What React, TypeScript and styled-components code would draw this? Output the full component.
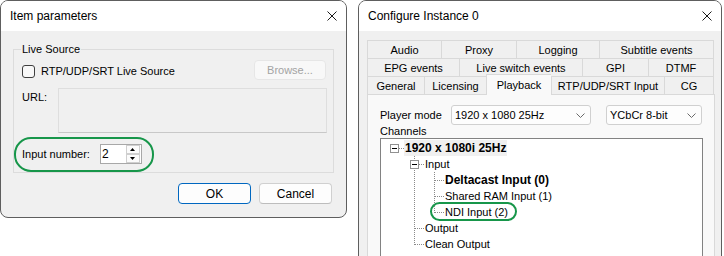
import React from "react";
import styled, { createGlobalStyle } from "styled-components";

type Conn = "none" | "pipe" | "tee" | "elbow" | "dash";

interface ITreeNode {
      label: string;
      guides: Conn[];
      bold?: boolean;
      toggle?: boolean;
      selected?: boolean;
      marked?: boolean;
}

const tabRows: [string, number][][] = [
      [
            ["Audio", 74],
            ["Proxy", 75],
            ["Logging", 83],
            ["Subtitle events", 115],
      ],
      [
            ["EPG events", 92],
            ["Live switch events", 123],
            ["GPI", 66],
            ["DTMF", 66],
      ],
      [
            ["General", 57],
            ["Licensing", 62],
            ["Playback", 65],
            ["RTP/UDP/SRT Input", 113],
            ["CG", 50],
      ],
];

const nodes: ITreeNode[] = [
      { label: "1920 x 1080i 25Hz", bold: true, selected: true, toggle: true, guides: ["dash"] },
      { label: "Input", toggle: true, guides: ["none", "tee"] },
      { label: "Deltacast Input (0)", bold: true, guides: ["none", "pipe", "tee"] },
      { label: "Shared RAM Input (1)", guides: ["none", "pipe", "tee"] },
      { label: "NDI Input (2)", marked: true, guides: ["none", "pipe", "elbow"] },
      { label: "Output", guides: ["none", "tee"] },
      { label: "Clean Output", guides: ["none", "elbow"] },
];

const GlobalStyle = createGlobalStyle`
      html, body {
            margin: 0;
            padding: 0;
            height: 256px;
            overflow: hidden;
            background: #fff;
      }
      body {
            font-family: "Liberation Sans", Arial, sans-serif;
            color: #000;
      }
`;

const Page = styled.div`
      display: flex;
      align-items: flex-start;
      gap: 11px;
`;

const Dialog = styled.div<{ $width: number; $height?: number }>`
      width: ${({ $width }) => $width}px;
      ${({ $height }) => ($height ? `height: ${$height}px;` : "")}
      flex-shrink: 0;
      box-sizing: border-box;
      border: 1px solid #5e5e5e;
      border-radius: 8px;
      background: #f0f0f0;
      overflow: hidden;
`;

const TitleBar = styled.div`
      height: 30px;
      display: flex;
      align-items: center;
      justify-content: space-between;
      padding: 0 9px;
      background: #fff;
      font-size: 12px;
`;

const LeftBody = styled.div`
      padding: 11px 12px 13px 12px;
      font-size: 11px;
`;

const GroupBox = styled.fieldset`
      margin: 0;
      padding: 4px 7px 8px 8px;
      border: 1px solid #dcdcdc;
      min-inline-size: 0;
`;

const Legend = styled.legend`
      padding: 0 1px;
      margin-left: -1px;
      line-height: 14px;
      font-size: 11px;
`;

const SourceRow = styled.div`
      display: flex;
      align-items: center;
      justify-content: space-between;
      height: 20px;
`;

const CheckLabel = styled.label`
      display: flex;
      align-items: center;
      gap: 6px;
      padding-top: 2px;
`;

const CheckBox = styled.span`
      width: 13px;
      height: 13px;
      box-sizing: border-box;
      border: 1px solid #3f3f3f;
      border-radius: 3px;
      background: #f8f8f8;
`;

const BrowseButton = styled.div`
      width: 72px;
      height: 20px;
      box-sizing: border-box;
      border: 1px solid #e6e6e6;
      border-radius: 4px;
      background: #f8f8f8;
      color: #a3a3a3;
      display: flex;
      align-items: center;
      justify-content: center;
`;

const UrlRow = styled.div`
      display: flex;
      margin-top: 8px;
`;

const UrlLabel = styled.span`
      width: 36px;
      padding-top: 2px;
      line-height: 14px;
`;

const UrlBox = styled.div`
      width: 269px;
      height: 45px;
      box-sizing: border-box;
      margin-right: -1px;
      border: 1px solid #dedede;
      border-bottom-color: #c8c8c8;
      background: #f0f0f0;
`;

const NumberRow = styled.div`
      position: relative;
      display: flex;
      align-items: center;
      gap: 10px;
      margin-top: 11px;
      height: 20px;
`;

const Marker = styled.span<{ $thick?: number; $radius: number }>`
      position: absolute;
      box-sizing: border-box;
      border: ${({ $thick }) => $thick ?? 2}px solid #17964a;
      border-radius: ${({ $radius }) => $radius}px;
      pointer-events: none;
`;

const Spin = styled.div`
      width: 42px;
      height: 20px;
      box-sizing: border-box;
      border: 1px solid #a8a8a8;
      background: #fff;
      display: flex;
`;

const SpinValue = styled.span`
      flex: 1;
      padding-left: 1px;
      line-height: 18px;
      font-size: 12px;
`;

const SpinButtons = styled.div`
      width: 15px;
      box-sizing: border-box;
      padding: 0 1px 0 0;
      display: flex;
      flex-direction: column;
`;

const SpinButton = styled.div`
      flex: 1;
      box-sizing: border-box;
      border: 1px solid #cfcfcf;
      background: #fbfbfb;
      display: flex;
      align-items: center;
      justify-content: center;
`;

const ButtonRow = styled.div`
      display: flex;
      justify-content: flex-end;
      gap: 8px;
      margin-top: 10px;
      padding-right: 2px;
`;

const Button = styled.div<{ $default?: boolean }>`
      width: 73px;
      height: 21px;
      box-sizing: border-box;
      border: 1px solid ${({ $default }) => ($default ? "#0067c0" : "#d0d0d0")};
      border-bottom-color: ${({ $default }) => ($default ? "#0067c0" : "#bdbdbd")};
      border-radius: 4px;
      background: #fdfdfd;
      display: flex;
      align-items: center;
      justify-content: center;
      font-size: 12px;
`;

const RightBody = styled.div`
      padding: 9px 6px 0 8px;
`;

const TabRow = styled.div`
      display: flex;
      height: 18px;
`;

const Tab = styled.div<{ $w: number; $active?: boolean }>`
      width: ${({ $w }) => $w}px;
      height: ${({ $active }) => ($active ? 21 : 18)}px;
      margin-top: ${({ $active }) => ($active ? -2 : 0)}px;
      box-sizing: border-box;
      border: 1px solid #d9d9d9;
      border-bottom: none;
      border-right: none;
      background: ${({ $active }) => ($active ? "#f9f9f9" : "#f0f0f0")};
      position: relative;
      z-index: ${({ $active }) => ($active ? 1 : 0)};
      display: flex;
      align-items: center;
      justify-content: center;
      font-size: 11px;
      white-space: nowrap;

      &:last-child {
            border-right: 1px solid #d9d9d9;
      }
`;

const Panel = styled.div`
      width: 348px;
      height: 200px;
      box-sizing: border-box;
      border: 1px solid #d9d9d9;
      background: #f9f9f9;
      padding: 10px 11px 0 12px;
      font-size: 11px;
`;

const ModeRow = styled.div`
      display: flex;
      align-items: center;
      height: 20px;
`;

const ModeLabel = styled.span`
      width: 71px;
`;

const Combo = styled.div<{ $w: number; $gap?: number }>`
      width: ${({ $w }) => $w}px;
      margin-left: ${({ $gap }) => $gap ?? 0}px;
      height: 20px;
      box-sizing: border-box;
      border: 1px solid #d0d0d0;
      border-radius: 3px;
      background: #fdfdfd;
      display: flex;
      align-items: center;
      justify-content: space-between;
      padding: 0 5px 0 3px;
`;

const ChannelsLabel = styled.div`
      line-height: 13px;
`;

const Tree = styled.div`
      width: 323px;
      height: 130px;
      box-sizing: border-box;
      border: 1px solid #828282;
      background: #fff;
      padding: 1px 0 0 3px;
`;

const TreeRow = styled.div`
      display: flex;
      height: 16px;
`;

const TreeLabel = styled.span<{ $bold?: boolean; $selected?: boolean }>`
      position: relative;
      padding: 0 1px;
      line-height: 16px;
      font-size: ${({ $bold }) => ($bold ? 12 : 11)}px;
      font-weight: ${({ $bold }) => ($bold ? 700 : 400)};
      background: ${({ $selected }) => ($selected ? "#f0f0f0" : "transparent")};
      white-space: nowrap;
`;

const CloseIcon = () => (
      <svg width="10" height="10" viewBox="0 0 10 10">
            <path d="M0.5 0.5L9.5 9.5M9.5 0.5L0.5 9.5" stroke="#1a1a1a" strokeWidth="1" />
      </svg>
);

const Chevron = () => (
      <svg width="9" height="5" viewBox="0 0 9 5">
            <path d="M0.5 0.5L4.5 4.5L8.5 0.5" fill="none" stroke="#6a6a6a" strokeWidth="1" />
      </svg>
);

const Arrow = ({ down }: { down?: boolean }) => (
      <svg width="5" height="3" viewBox="0 0 5 3">
            <path d={down ? "M0 0H5L2.5 3Z" : "M0 3H5L2.5 0Z"} fill="#000" />
      </svg>
);

const Guide = ({ kind, toggle }: { kind: Conn; toggle?: boolean }) => {
      const dash = { stroke: "#8a8a8a", strokeWidth: 1, strokeDasharray: "1 1" };
      return (
            <svg width="20" height="16" viewBox="0 0 20 16">
                  {(kind === "pipe" || kind === "tee") && <line x1="10.5" y1="0" x2="10.5" y2="16" {...dash} />}
                  {kind === "elbow" && <line x1="10.5" y1="0" x2="10.5" y2="9" {...dash} />}
                  {(kind === "tee" || kind === "elbow" || kind === "dash") && (
                        <line x1="11" y1="8.5" x2="20" y2="8.5" {...dash} />
                  )}
                  {toggle && (
                        <>
                              <rect x="6.5" y="4.5" width="8" height="8" fill="#fff" stroke="#919191" />
                              <line x1="8" y1="8.5" x2="13" y2="8.5" stroke="#000" strokeWidth="1" />
                        </>
                  )}
            </svg>
      );
};

const ItemParameters = () => (
      <Dialog $width={347}>
            <TitleBar>
                  <span>Item parameters</span>
                  <CloseIcon />
            </TitleBar>
            <LeftBody>
                  <GroupBox>
                        <Legend>Live Source</Legend>
                        <SourceRow>
                              <CheckLabel>
                                    <CheckBox />
                                    RTP/UDP/SRT Live Source
                              </CheckLabel>
                              <BrowseButton>Browse...</BrowseButton>
                        </SourceRow>
                        <UrlRow>
                              <UrlLabel>URL:</UrlLabel>
                              <UrlBox />
                        </UrlRow>
                        <NumberRow>
                              <span>Input number:</span>
                              <Spin>
                                    <SpinValue>2</SpinValue>
                                    <SpinButtons>
                                          <SpinButton>
                                                <Arrow />
                                          </SpinButton>
                                          <SpinButton>
                                                <Arrow down />
                                          </SpinButton>
                                    </SpinButtons>
                              </Spin>
                              <Marker
                                    $thick={2.5}
                                    $radius={17}
                                    style={{ left: -8, top: -7, width: 140, height: 35 }}
                              />
                        </NumberRow>
                  </GroupBox>
                  <ButtonRow>
                        <Button $default>OK</Button>
                        <Button>Cancel</Button>
                  </ButtonRow>
            </LeftBody>
      </Dialog>
);

const ConfigureInstance = () => (
      <Dialog $width={364} $height={300}>
            <TitleBar>
                  <span>Configure Instance 0</span>
                  <CloseIcon />
            </TitleBar>
            <RightBody>
                  {tabRows.map((row, i) => (
                        <TabRow key={i}>
                              {row.map(([label, w]) => (
                                    <Tab key={label} $w={w} $active={label === "Playback"}>
                                          {label}
                                    </Tab>
                              ))}
                        </TabRow>
                  ))}
                  <Panel>
                        <ModeRow>
                              <ModeLabel>Player mode</ModeLabel>
                              <Combo $w={140}>
                                    1920 x 1080 25Hz
                                    <Chevron />
                              </Combo>
                              <Combo $w={96} $gap={15}>
                                    YCbCr 8-bit
                                    <Chevron />
                              </Combo>
                        </ModeRow>
                        <ChannelsLabel>Channels</ChannelsLabel>
                        <Tree>
                              {nodes.map((node) => (
                                    <TreeRow key={node.label}>
                                          {node.guides.map((g, i) => (
                                                <Guide
                                                      key={i}
                                                      kind={g}
                                                      toggle={node.toggle && i === node.guides.length - 1}
                                                />
                                          ))}
                                          <TreeLabel $bold={node.bold} $selected={node.selected}>
                                                {node.label}
                                                {node.marked && (
                                                      <Marker
                                                            $radius={10}
                                                            style={{ left: -14, top: -2, width: 87, height: 19 }}
                                                      />
                                                )}
                                          </TreeLabel>
                                    </TreeRow>
                              ))}
                        </Tree>
                  </Panel>
            </RightBody>
      </Dialog>
);

const App: React.FC = () => (
      <>
            <GlobalStyle />
            <Page>
                  <ItemParameters />
                  <ConfigureInstance />
            </Page>
      </>
);

export default App;
